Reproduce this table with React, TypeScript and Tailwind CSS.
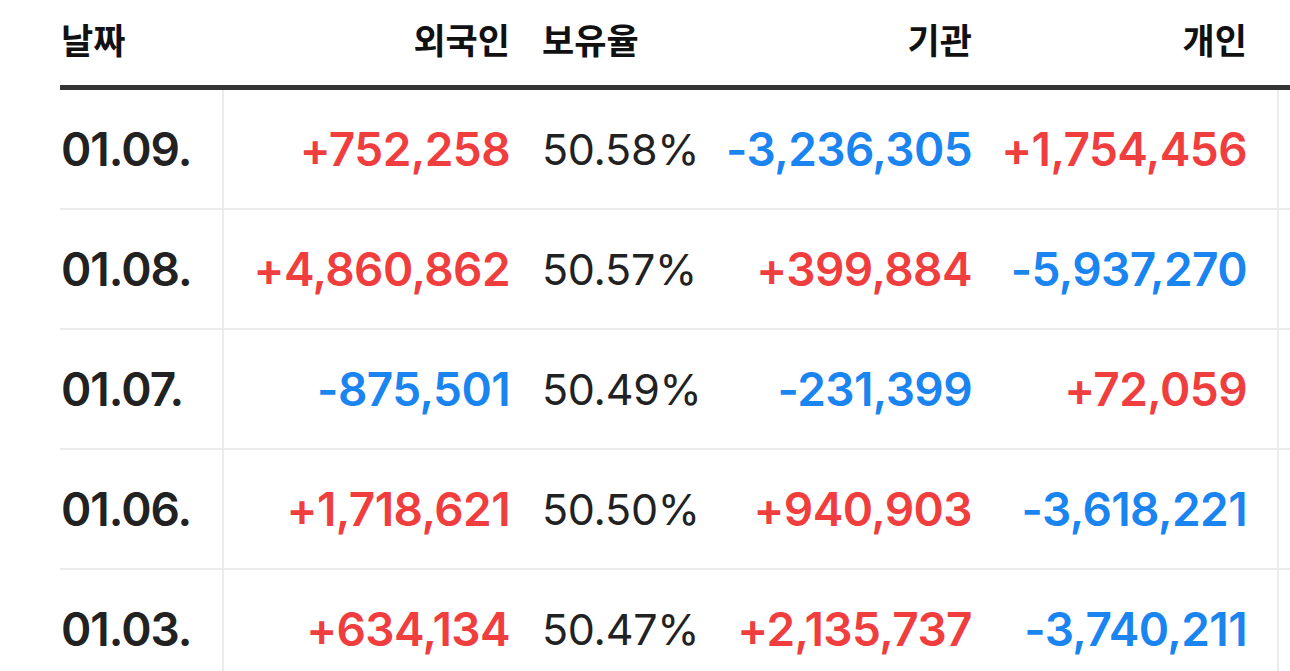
import React from "react";

type Row = { date: string; foreign: string; ratio: string; inst: string; indiv: string };

const rows: Row[] = [
  { date: "01.09.", foreign: "+752,258", ratio: "50.58%", inst: "-3,236,305", indiv: "+1,754,456" },
  { date: "01.08.", foreign: "+4,860,862", ratio: "50.57%", inst: "+399,884", indiv: "-5,937,270" },
  { date: "01.07.", foreign: "-875,501", ratio: "50.49%", inst: "-231,399", indiv: "+72,059" },
  { date: "01.06.", foreign: "+1,718,621", ratio: "50.50%", inst: "+940,903", indiv: "-3,618,221" },
  { date: "01.03.", foreign: "+634,134", ratio: "50.47%", inst: "+2,135,737", indiv: "-3,740,211" },
];

function Num({ v }: { v: string }) {
  const neg = v.startsWith("-");
  return <span className={neg ? "text-[#1a84f0]" : "text-[#f03e3e]"}>{v}</span>;
}

export default function App() {
  return (
    <div
      className="w-[1290px] h-[671px] overflow-hidden bg-white pl-[60px]"
      style={{ fontFamily: "Inter, 'Noto Sans CJK KR', sans-serif" }}
    >
      <div className="w-[1500px]">
        {/* Header */}
        <div className="flex h-[90px] items-center border-b-[5px] border-[#353535] pb-[8px] text-[35px] font-bold text-[#111] leading-none" style={{ fontFamily: "'Noto Sans CJK KR', sans-serif" }}>
          <div className="w-[162px] pl-[1px]">날짜</div>
          <div className="w-[318px] pr-[30px] text-right">외국인</div>
          <div className="w-[160px] pl-[2px]">보유율</div>
          <div className="w-[302px] pr-[30px] text-right">기관</div>
          <div className="w-[275px] pr-[30px] text-right">개인</div>
          <div className="w-[200px]"></div>
        </div>
        {/* Body */}
        {rows.map((r) => (
          <div key={r.date} className="flex h-[120px] border-b-2 border-[#ebebeb] leading-none">
            <div className="flex w-[162px] items-center pl-[1px] text-[46px] font-semibold tracking-[-1px] text-[#222]">
              {r.date}
            </div>
            <div className="flex w-[318px] items-center justify-end border-l-2 border-[#ebebeb] pr-[30px] text-[46px] font-semibold tracking-[-0.6px]">
              <Num v={r.foreign} />
            </div>
            <div className="flex w-[160px] items-center pl-[2px] text-[43px] font-normal tracking-[-0.3px] text-[#222]">
              {r.ratio}
            </div>
            <div className="flex w-[302px] items-center justify-end pr-[30px] text-[46px] font-semibold tracking-[-0.6px]">
              <Num v={r.inst} />
            </div>
            <div className="flex w-[275px] items-center justify-end pr-[30px] text-[46px] font-semibold tracking-[-0.6px]">
              <Num v={r.indiv} />
            </div>
            <div className="w-[200px] border-l-2 border-[#ebebeb]"></div>
          </div>
        ))}
      </div>
    </div>
  );
}
